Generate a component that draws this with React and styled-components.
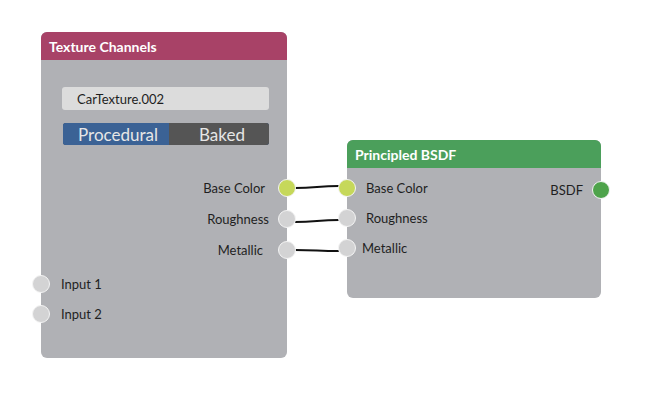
import React from "react";
import styled, { createGlobalStyle } from "styled-components";

const GlobalStyle = createGlobalStyle`
    * { box-sizing: border-box; }
    body {
        margin: 0;
        background: #ffffff;
        font-family: Lato, "Noto Sans", sans-serif;
    }
`;

const SOCKET = {
    gray: "#d3d3d4",
    lime: "#c6d85a",
    green: "#4ea34b",
};

export default function App() {
    return (
        <>
            <GlobalStyle />
            <Canvas>
                <Wires width="647" height="414">
                    <path d="M295 188 C 316 188, 318 186, 339 186" />
                    <path d="M295 222 C 316 222, 318 220, 339 220" />
                    <path d="M295 250 C 316 250, 318 251, 339 251" />
                </Wires>

                <Node $left={41} $top={32} $width={246} $height={326}>
                    <Header $color="#a84267">Texture Channels</Header>
                    <Body>
                        <TextField>CarTexture.002</TextField>
                        <Toggle>
                            <ToggleOption $active>Procedural</ToggleOption>
                            <ToggleOption>Baked</ToggleOption>
                        </Toggle>
                        <Outputs>
                            <Row $side="out" $pad={22}>
                                Base Color
                                <Socket $side="out" $color={SOCKET.lime} />
                            </Row>
                            <Row $side="out" $pad={18}>
                                Roughness
                                <Socket $side="out" $color={SOCKET.gray} />
                            </Row>
                            <Row $side="out" $pad={24}>
                                Metallic
                                <Socket $side="out" $color={SOCKET.gray} />
                            </Row>
                        </Outputs>
                        <Inputs>
                            <Row $side="in" $pad={20} $h={30}>
                                <Socket $side="in" $color={SOCKET.gray} />
                                Input 1
                            </Row>
                            <Row $side="in" $pad={20} $h={30}>
                                <Socket $side="in" $color={SOCKET.gray} />
                                Input 2
                            </Row>
                        </Inputs>
                    </Body>
                </Node>

                <Node $left={347} $top={140} $width={254} $height={158}>
                    <Header $color="#4b9f5b">Principled BSDF</Header>
                    <Body>
                        <Outputs $top={4}>
                            <Split>
                                <Row $side="in" $pad={19}>
                                    <Socket $side="in" $color={SOCKET.lime} />
                                    Base Color
                                </Row>
                                <Row $side="out" $pad={18} $shift={2}>
                                    BSDF
                                    <Socket $side="out" $color={SOCKET.green} />
                                </Row>
                            </Split>
                            <Row $side="in" $pad={19} $h={30} $shift={-2}>
                                <Socket $side="in" $color={SOCKET.gray} />
                                Roughness
                            </Row>
                            <Row $side="in" $pad={15} $h={30}>
                                <Socket $side="in" $color={SOCKET.gray} />
                                Metallic
                            </Row>
                        </Outputs>
                    </Body>
                </Node>
            </Canvas>
        </>
    );
}

// estilos
const Canvas = styled.main`
    position: relative;
    width: 647px;
    height: 414px;
    background: #ffffff;
    overflow: hidden;
`;

const Wires = styled.svg`
    position: absolute;
    left: 0;
    top: 0;
    pointer-events: none;
    path {
        fill: none;
        stroke: #111111;
        stroke-width: 2;
    }
`;

const Node = styled.section`
    position: absolute;
    left: ${(p) => p.$left}px;
    top: ${(p) => p.$top}px;
    width: ${(p) => p.$width}px;
    height: ${(p) => p.$height}px;
    background: #b0b1b5;
    border-radius: 6px;
    display: flex;
    flex-direction: column;
`;

const Header = styled.header`
    height: 28px;
    padding: 0 8px;
    display: flex;
    align-items: center;
    background: ${(p) => p.$color};
    border-radius: 6px 6px 0 0;
    color: #ffffff;
    font-weight: 700;
    font-size: 14px;
`;

const Body = styled.div`
    display: flex;
    flex-direction: column;
`;

const TextField = styled.div`
    margin: 27px 0 0 21px;
    width: 207px;
    height: 23px;
    padding-left: 15px;
    display: flex;
    align-items: center;
    background: #dcdcdc;
    border-radius: 3px;
    color: #1e1e1e;
    font-size: 13px;
`;

const Toggle = styled.div`
    margin: 13px 0 0 22px;
    width: 206px;
    height: 22px;
    display: flex;
    border-radius: 3px;
    overflow: hidden;
    background: #555555;
    box-shadow: 0 0 0 1px #3d5f8e inset;
`;

const ToggleOption = styled.div`
    flex: ${(p) => (p.$active ? "0 0 106px" : "1")};
    display: flex;
    align-items: center;
    justify-content: center;
    background: ${(p) => (p.$active ? "#3b6295" : "#555555")};
    color: #e6e6e6;
    font-size: 17px;
    padding-left: ${(p) => (p.$active ? "4px" : "6px")};
`;

const Outputs = styled.div`
    margin-top: ${(p) => p.$top ?? 27}px;
    display: flex;
    flex-direction: column;
`;

const Inputs = styled.div`
    margin-top: 4px;
    display: flex;
    flex-direction: column;
`;

const Split = styled.div`
    display: flex;
    justify-content: space-between;
    > * {
        flex: 1;
    }
`;

const Row = styled.div`
    position: relative;
    height: ${(p) => p.$h ?? 31}px;
    display: flex;
    align-items: center;
    justify-content: ${(p) => (p.$side === "out" ? "flex-end" : "flex-start")};
    padding-${(p) => (p.$side === "out" ? "right" : "left")}: ${(p) => p.$pad}px;
    margin-top: ${(p) => p.$shift ?? 0}px;
    color: #1f1f1f;
    font-size: 13px;
`;

const Socket = styled.span`
    position: absolute;
    top: 50%;
    ${(p) => (p.$side === "out" ? "right: -9px;" : "left: -9px;")}
    width: 18px;
    height: 18px;
    margin-top: -9px;
    border-radius: 50%;
    background: ${(p) => p.$color};
    border: 1px solid #f4f4f4;
`;
